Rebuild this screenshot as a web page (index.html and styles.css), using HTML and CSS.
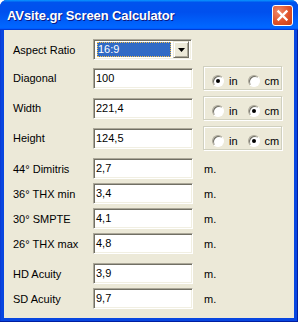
FILE: index.html
```html
<!DOCTYPE html>
<html lang="en">
<head>
    <meta charset="UTF-8">
    <title>AVsite.gr Screen Calculator</title>
    <link rel="stylesheet" href="styles.css">
</head>
<body>
    <div class="window">
        <div class="titlebar">
            <span class="title">AVsite.gr Screen Calculator</span>
            <span class="close">
                <svg width="19" height="19" viewBox="0 0 19 19">
                    <path d="M5.5 5.5 L13.5 13.5 M13.5 5.5 L5.5 13.5" stroke="#fff" stroke-width="2.4" stroke-linecap="square"/>
                </svg>
            </span>
        </div>

        <div class="client">
            <div class="row row-select">
                <span class="label">Aspect Ratio</span>
                <div class="select">
                    <span class="select-value">16:9</span>
                    <span class="select-btn">
                        <svg width="7" height="4" viewBox="0 0 7 4"><path d="M0 0 H7 L3.5 4 Z" fill="#000"/></svg>
                    </span>
                </div>
            </div>

            <div class="row row-unit">
                <span class="label">Diagonal</span>
                <div class="field">100</div>
                <div class="units">
                    <span class="radio checked"></span><span class="unit-text">in</span>
                    <span class="radio second"></span><span class="unit-text">cm</span>
                </div>
            </div>
            <div class="row row-unit">
                <span class="label">Width</span>
                <div class="field">221,4</div>
                <div class="units">
                    <span class="radio"></span><span class="unit-text">in</span>
                    <span class="radio second checked"></span><span class="unit-text">cm</span>
                </div>
            </div>
            <div class="row row-unit">
                <span class="label">Height</span>
                <div class="field">124,5</div>
                <div class="units">
                    <span class="radio"></span><span class="unit-text">in</span>
                    <span class="radio second checked"></span><span class="unit-text">cm</span>
                </div>
            </div>

            <div class="row row-dist first">
                <span class="label">44° Dimitris</span>
                <div class="field">2,7</div>
                <span class="meter">m.</span>
            </div>
            <div class="row row-dist">
                <span class="label">36° THX min</span>
                <div class="field">3,4</div>
                <span class="meter">m.</span>
            </div>
            <div class="row row-dist">
                <span class="label">30° SMPTE</span>
                <div class="field">4,1</div>
                <span class="meter">m.</span>
            </div>
            <div class="row row-dist">
                <span class="label">26° THX max</span>
                <div class="field">4,8</div>
                <span class="meter">m.</span>
            </div>

            <div class="row row-dist group">
                <span class="label">HD Acuity</span>
                <div class="field">3,9</div>
                <span class="meter">m.</span>
            </div>
            <div class="row row-dist">
                <span class="label">SD Acuity</span>
                <div class="field">9,7</div>
                <span class="meter">m.</span>
            </div>
        </div>
    </div>
</body>
</html>
```

FILE: styles.css
```css
:root {
    --face: #ece9d8;
    --shadow: #aca899;
    --dark-shadow: #716f64;
    --light: #f1efe2;
}

body {
    margin: 0;
    background: #fff;
    font-family: 'Liberation Sans', Arial, sans-serif;
    font-size: 11px;
    color: #000;
}

.window {
    width: 298px;
    height: 322px;
    box-sizing: border-box;
    display: flex;
    flex-direction: column;
    background: #0846e0;
    border-radius: 7px 7px 0 0;
    overflow: hidden;
    box-shadow: inset -1px -1px 0 #001ea0, inset 1px 0 0 #0a3cd6;
}

.titlebar {
    height: 30px;
    flex: none;
    display: flex;
    align-items: center;
    justify-content: space-between;
    padding: 0 5px 0 7px;
    background: linear-gradient(180deg, #0997ff, #0053ee 8%, #0050ee 40%, #0066ff 88%, #0066ff 93%, #005bff 95%, #003dd7 96%, #003dd7);
}

.title {
    color: #fff;
    font-weight: bold;
    font-size: 13px;
    letter-spacing: -0.1px;
    text-shadow: 1px 1px 0 #0a1883;
    margin-top: 1px;
}

.close {
    width: 21px;
    height: 21px;
    box-sizing: border-box;
    border: 1px solid #fff;
    border-radius: 3px;
    background: radial-gradient(circle at 30% 30%, #f08a6a, #e0522a 55%, #c43e18);
    display: flex;
    align-items: center;
    justify-content: center;
    margin-top: 1px;
}

.client {
    flex: 1;
    margin: 0 4px 4px;
    background: var(--face);
    padding: 9px 0 0 9px;
    display: flex;
    flex-direction: column;
}

.row {
    display: flex;
    align-items: center;
}

.label {
    width: 80px;
    flex: none;
}

.row-select {
    height: 21px;
}

.row-unit {
    height: 24px;
    margin-top: 6px;
}

.row-dist {
    height: 21px;
    margin-top: 4px;
}

.row-dist.first {
    margin-top: 8px;
}

.row-dist.group {
    margin-top: 9px;
}

.field,
.select {
    height: 21px;
    box-sizing: border-box;
    background: #fff;
    border: 1px solid;
    border-color: var(--shadow) #fff #fff var(--shadow);
    box-shadow: inset 1px 1px 0 var(--dark-shadow), inset -1px -1px 0 var(--light);
}

.field {
    width: 100px;
    padding: 0 0 0 2px;
    line-height: 19px;
}

.select {
    width: 99px;
    display: flex;
    align-items: center;
    padding: 2px 2px 2px 3px;
}

.select-value {
    flex: 1;
    height: 15px;
    box-sizing: border-box;
    margin-right: 2px;
    background: #316ac5;
    color: #fff;
    border: 1px dotted #f5c04a;
    line-height: 13px;
    padding-left: 0;
}

.select-btn {
    width: 16px;
    height: 17px;
    box-sizing: border-box;
    background: var(--face);
    border: 1px solid;
    border-color: var(--face) var(--dark-shadow) var(--dark-shadow) var(--face);
    box-shadow: inset 1px 1px 0 #fff, inset -1px -1px 0 var(--shadow);
    display: flex;
    align-items: center;
    justify-content: center;
}

.units {
    margin-left: 10px;
    width: 79px;
    height: 24px;
    box-sizing: border-box;
    border: 1px solid #d0d0bf;
    box-shadow: 1px 1px 0 #fff, inset 1px 1px 0 #fff;
    display: flex;
    align-items: center;
    padding: 6px 0 0 8px;
}

.radio {
    width: 12px;
    height: 12px;
    box-sizing: border-box;
    border-radius: 50%;
    background: #fff;
    border: 1px solid;
    border-color: var(--shadow) #fff #fff var(--shadow);
    box-shadow: inset 1px 1px 0 var(--dark-shadow);
    position: relative;
    flex: none;
}

.radio.second {
    margin-left: 10px;
}

.radio.checked::after {
    content: '';
    position: absolute;
    left: 3px;
    top: 3px;
    width: 4px;
    height: 4px;
    border-radius: 50%;
    background: #000;
}

.unit-text {
    margin-left: 5px;
}

.meter {
    margin-left: 11px;
}
```
